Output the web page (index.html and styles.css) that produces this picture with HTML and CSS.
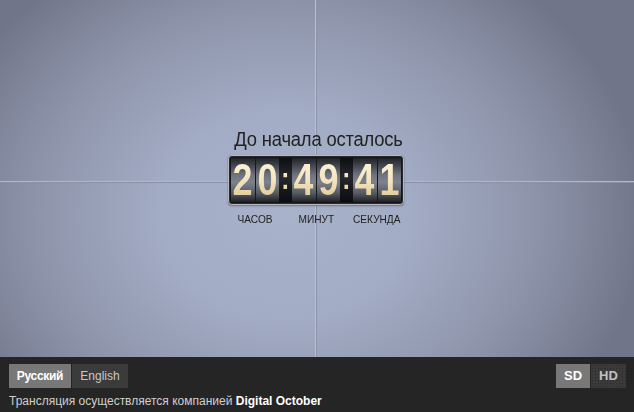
FILE: index.html
```html
<!DOCTYPE html>
<html lang="ru">
<head>
<meta charset="utf-8">
<title>До начала осталось</title>
<link rel="stylesheet" href="styles.css">
</head>
<body>
<div class="stage">
  <div class="countdown">
    <div class="title"><span class="narrow">До начала осталось</span></div>
    <div class="clock">
      <span class="cell"><i>2</i></span><span class="cell sep"><i>0</i></span><span class="colon"><i>:</i></span><span class="cell"><i>4</i></span><span class="cell sep"><i>9</i></span><span class="colon"><i>:</i></span><span class="cell"><i>4</i></span><span class="cell sep"><i>1</i></span>
    </div>
    <div class="labels">
      <span class="lbl"><i>ЧАСОВ</i></span><span></span><span class="lbl"><i>МИНУТ</i></span><span></span><span class="lbl"><i>СЕКУНДА</i></span>
    </div>
  </div>
</div>
<div class="footer">
  <div class="row">
    <div class="group">
      <span class="btn active ru">Русский</span><span class="btn en">English</span>
    </div>
    <div class="group">
      <span class="btn q active">SD</span><span class="btn q dotted">HD</span>
    </div>
  </div>
  <div class="credit">Трансляция осуществляется компанией <b>Digital October</b></div>
</div>
</body>
</html>
```
FILE: styles.css
```css
html, body {
  margin: 0;
  padding: 0;
}
body {
  width: 634px;
  height: 412px;
  overflow: hidden;
  font-family: "Liberation Sans", Arial, sans-serif;
  background: #252525;
}
i {
  font-style: normal;
  display: inline-block;
}
.stage {
  height: 357px;
  box-sizing: border-box;
  padding-top: 128px;
  background:
    linear-gradient(to right, transparent 315px, #b9c0d4 315px, #b9c0d4 316px, #8d93a6 316px, #8d93a6 317px, transparent 317px),
    linear-gradient(to bottom, transparent 181px, #b3b9cc 181px, #b3b9cc 182px, #8a90a3 182px, #8a90a3 183px, transparent 183px),
    radial-gradient(ellipse 360px 300px at 285px 215px, #a9b2cb 0%, #a3acc5 35%, #8d94aa 70%, #717589 100%);
  display: flex;
  flex-direction: column;
  align-items: center;
}
.countdown {
  display: flex;
  flex-direction: column;
  align-items: center;
  margin-right: 2px;
}
.title {
  font-size: 20px;
  line-height: 22px;
  color: #222;
  margin-bottom: 5px;
  margin-left: 5px;
  display: flex;
  justify-content: center;
}
.narrow {
  display: inline-block;
  transform: scaleX(0.92);
  letter-spacing: -0.2px;
}
.clock {
  display: flex;
  padding: 2px;
  border: 1px solid #b5b7bc;
  border-radius: 4px;
  background: #15161a;
  box-shadow: 0 1px 2px rgba(0,0,0,0.35), inset 0 0 0 1px #2a2b2f;
}
.cell, .colon {
  height: 44px;
  display: flex;
  align-items: center;
  justify-content: center;
  font-weight: bold;
  font-size: 45px;
  line-height: 44px;
}
.cell i, .colon i {
  line-height: 40px;
  height: 40px;
  transform: scaleX(0.8);
  background: linear-gradient(to bottom, #fcf3da 0%, #f4e5be 50%, #dec697 100%);
  -webkit-background-clip: text;
  background-clip: text;
  color: transparent;
}
.cell {
  width: 24px;
  background: linear-gradient(to bottom, #202226 0%, #383b42 12%, #6d727d 38%, #7d828c 55%, #555a63 80%, #1e2024 100%);
}
.cell.sep {
  border-left: 1px solid #17181b;
  width: 23px;
}
.colon {
  width: 13px;
  font-size: 32px;
  background: linear-gradient(to bottom, #0e0f12 0%, #26282d 45%, #1c1e22 60%, #0c0d10 100%);
  padding-bottom: 4px;
  box-sizing: border-box;
}
.labels {
  display: grid;
  grid-template-columns: 48px 13px 48px 13px 48px;
  margin-top: 8px;
}
.lbl {
  display: flex;
  justify-content: center;
  white-space: nowrap;
  font-size: 11px;
  line-height: 12px;
  color: #222;
}
.lbl i {
  transform: scaleX(0.92);
}
.footer {
  height: 55px;
  box-sizing: border-box;
  padding: 7px 8px 0 9px;
  background: #252525;
}
.row {
  display: flex;
  justify-content: space-between;
}
.group {
  display: flex;
  gap: 1px;
}
.btn {
  height: 24px;
  line-height: 24px;
  font-size: 12px;
  color: #c8c8c8;
  background: #3b3b3b;
  text-align: center;
}
.btn.ru {
  width: 62px;
  letter-spacing: -0.3px;
}
.btn.en {
  width: 56px;
}
.btn.active {
  background: #787878;
  color: #fff;
  font-weight: bold;
}
.btn.q {
  font-weight: bold;
  font-size: 13px;
  width: 34px;
  color: #c0c0c0;
}
.btn.q.active {
  color: #fff;
}
.btn.dotted {
  background-color: #3a3a3a;
  background-image: radial-gradient(#2c2c2c 0.6px, transparent 0.8px);
  background-size: 3px 3px;
  width: 35px;
}
.credit {
  margin-top: 6px;
  font-size: 12px;
  line-height: 14px;
  color: #cfcfcf;
}
.credit b {
  color: #fff;
}
```
